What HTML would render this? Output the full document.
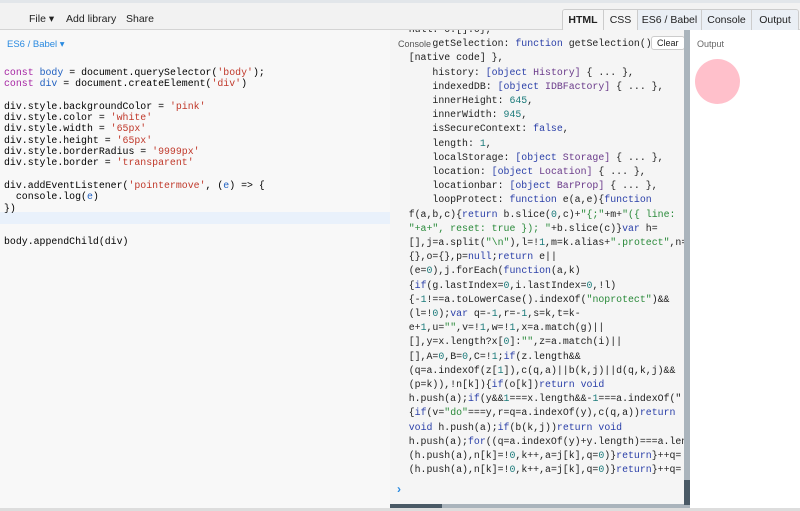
<!DOCTYPE html>
<html><head><style>
*{margin:0;padding:0;box-sizing:border-box}
body{width:800px;height:511px;overflow:hidden;background:#fff;font-family:"Liberation Sans",sans-serif;position:relative}
.top{position:absolute;left:0;top:0;width:800px;height:30px;background:#f2f2f2;border-top:3px solid #e2e6ea;border-bottom:1px solid #d4d4d4}
.menu{position:absolute;top:10px;font-size:10.5px;color:#222}
.tabs{position:absolute;left:562px;top:6px;height:23px;display:flex;border:1px solid #ccc;border-radius:3px;overflow:hidden}
.tabs div{font-size:10.5px;text-align:center;white-space:nowrap;line-height:21px;border-right:1px solid #ccc;background:#eaeff5;color:#222}
.tabs div:last-child{border-right:none}
.tabs .w{background:#f5f5f5}
.ed{position:absolute;left:0;top:30px;width:390px;height:478px;background:#f8f8f8}
.mono{font-family:"Liberation Mono",monospace;font-size:9.9px;white-space:pre;position:absolute}
.ed .mono{left:4px;line-height:11.3px}
.k{color:#a626a4}.v{color:#2060c0}.s{color:#c0392b}
.con{position:absolute;left:390px;top:30px;width:294px;height:475px;background:#f5f5f5;overflow:hidden}
.con .mono{left:-5px;top:-7px;line-height:14.2px;color:#222}
.b{color:#2a3fa8}.n{color:#1a7a7a}.g{color:#2a8a3a}.p{color:#6a3a8a}
.out{position:absolute;left:690px;top:30px;width:110px;height:478px;background:#fff}
</style></head><body>
<div class="top">
<span class="menu" style="left:29px">File ▾</span>
<span class="menu" style="left:66px">Add library</span>
<span class="menu" style="left:126px">Share</span>
<div class="tabs"><div class="w" style="font-weight:bold;width:41px">HTML</div><div class="w" style="width:34px">CSS</div><div style="width:64px">ES6 / Babel</div><div style="width:50px">Console</div><div style="width:46px">Output</div></div>
</div>
<div class="ed">
<div style="position:absolute;left:7px;top:9px;font-size:9.5px;color:#2a8ae0">ES6 / Babel ▾</div>
<div style="position:absolute;left:0;top:182px;width:390px;height:12px;background:#e9f1fb"></div>
<div class="mono" style="top:37px"><span class="k">const</span> <span class="v">body</span> = document.querySelector(<span class="s">'body'</span>);
<span class="k">const</span> <span class="v">div</span> = document.createElement(<span class="s">'div'</span>)

div.style.backgroundColor = <span class="s">'pink'</span>
div.style.color = <span class="s">'white'</span>
div.style.width = <span class="s">'65px'</span>
div.style.height = <span class="s">'65px'</span>
div.style.borderRadius = <span class="s">'9999px'</span>
div.style.border = <span class="s">'transparent'</span>

div.addEventListener(<span class="s">'pointermove'</span>, (<span class="v">e</span>) =&gt; {
  console.log(<span class="v">e</span>)
})


body.appendChild(div)</div>
</div>
<div class="con">
<div class="mono">    null: 0:[]:0},
        getSelection: <span class="b">function</span> getSelection() {
    [native code] },
        history: <span class="b">[object</span> <span class="p">History]</span> { ... },
        indexedDB: <span class="b">[object</span> <span class="p">IDBFactory]</span> { ... },
        innerHeight: <span class="n">645</span>,
        innerWidth: <span class="n">945</span>,
        isSecureContext: <span class="b">false</span>,
        length: <span class="n">1</span>,
        localStorage: <span class="b">[object</span> <span class="p">Storage]</span> { ... },
        location: <span class="b">[object</span> <span class="p">Location]</span> { ... },
        locationbar: <span class="b">[object</span> <span class="p">BarProp]</span> { ... },
        loopProtect: <span class="b">function</span> e(a,e){<span class="b">function</span>
    f(a,b,c){<span class="b">return</span> b.slice(<span class="n">0</span>,c)+<span class="g">"{;"</span>+m+<span class="g">"({ line:</span>
<span class="g">    "+a+", reset: true }); "</span>+b.slice(c)}<span class="b">var</span> h=
    [],j=a.split(<span class="g">"\n"</span>),l=!<span class="n">1</span>,m=k.alias+<span class="g">".protect"</span>,n=
    {},o={},p=<span class="b">null</span>;<span class="b">return</span> e||
    (e=<span class="n">0</span>),j.forEach(<span class="b">function</span>(a,k)
    {<span class="b">if</span>(g.lastIndex=<span class="n">0</span>,i.lastIndex=<span class="n">0</span>,!l)
    {-<span class="n">1</span>!==a.toLowerCase().indexOf(<span class="g">"noprotect"</span>)&amp;&amp;
    (l=!<span class="n">0</span>);<span class="b">var</span> q=-<span class="n">1</span>,r=-<span class="n">1</span>,s=k,t=k-
    e+<span class="n">1</span>,u=<span class="g">""</span>,v=!<span class="n">1</span>,w=!<span class="n">1</span>,x=a.match(g)||
    [],y=x.length?x[<span class="n">0</span>]:<span class="g">""</span>,z=a.match(i)||
    [],A=<span class="n">0</span>,B=<span class="n">0</span>,C=!<span class="n">1</span>;<span class="b">if</span>(z.length&amp;&amp;
    (q=a.indexOf(z[<span class="n">1</span>]),c(q,a)||b(k,j)||d(q,k,j)&amp;&amp;
    (p=k)),!n[k]){<span class="b">if</span>(o[k])<span class="b">return void</span>
    h.push(a);<span class="b">if</span>(y&amp;&amp;<span class="n">1</span>===x.length&amp;&amp;-<span class="n">1</span>===a.indexOf("
    {<span class="b">if</span>(v=<span class="g">"do"</span>===y,r=q=a.indexOf(y),c(q,a))<span class="b">return</span>
    <span class="b">void</span> h.push(a);<span class="b">if</span>(b(k,j))<span class="b">return void</span>
    h.push(a);<span class="b">for</span>((q=a.indexOf(y)+y.length)===a.length
    (h.push(a),n[k]=!<span class="n">0</span>,k++,a=j[k],q=<span class="n">0</span>)}<span class="b">return</span>}++q=
    (h.push(a),n[k]=!<span class="n">0</span>,k++,a=j[k],q=<span class="n">0</span>)}<span class="b">return</span>}++q=</div>
<div style="position:absolute;left:8px;top:9px;font-size:9px;color:#555;background:#f5f5f5;padding-right:1px">Console</div>
<div style="position:absolute;left:261px;top:6px;font-size:9px;color:#222;background:#fff;border:1px solid #ccc;border-radius:3px;padding:1px 5px">Clear</div>
<div style="position:absolute;left:7px;top:452px;font-size:12px;color:#2a8ae0;font-weight:bold">›</div>
</div>
<div style="position:absolute;left:684px;top:30px;width:6px;height:478px;background:#aab4bc"></div>
<div style="position:absolute;left:684px;top:480px;width:6px;height:25px;background:#4a5a66"></div>
<div style="position:absolute;left:390px;top:504px;width:294px;height:5px;background:#aab4bc"></div>
<div style="position:absolute;left:390px;top:504px;width:52px;height:5px;background:#4a5a66"></div>
<div style="position:absolute;left:0;top:508px;width:800px;height:3px;background:#ddd"></div>
<div class="out">
<div style="position:absolute;left:7px;top:9px;font-size:9px;color:#666">Output</div>
<div style="position:absolute;left:5px;top:29px;width:45px;height:45px;border-radius:50%;background:#ffc0cb"></div>
</div>
</body></html>
